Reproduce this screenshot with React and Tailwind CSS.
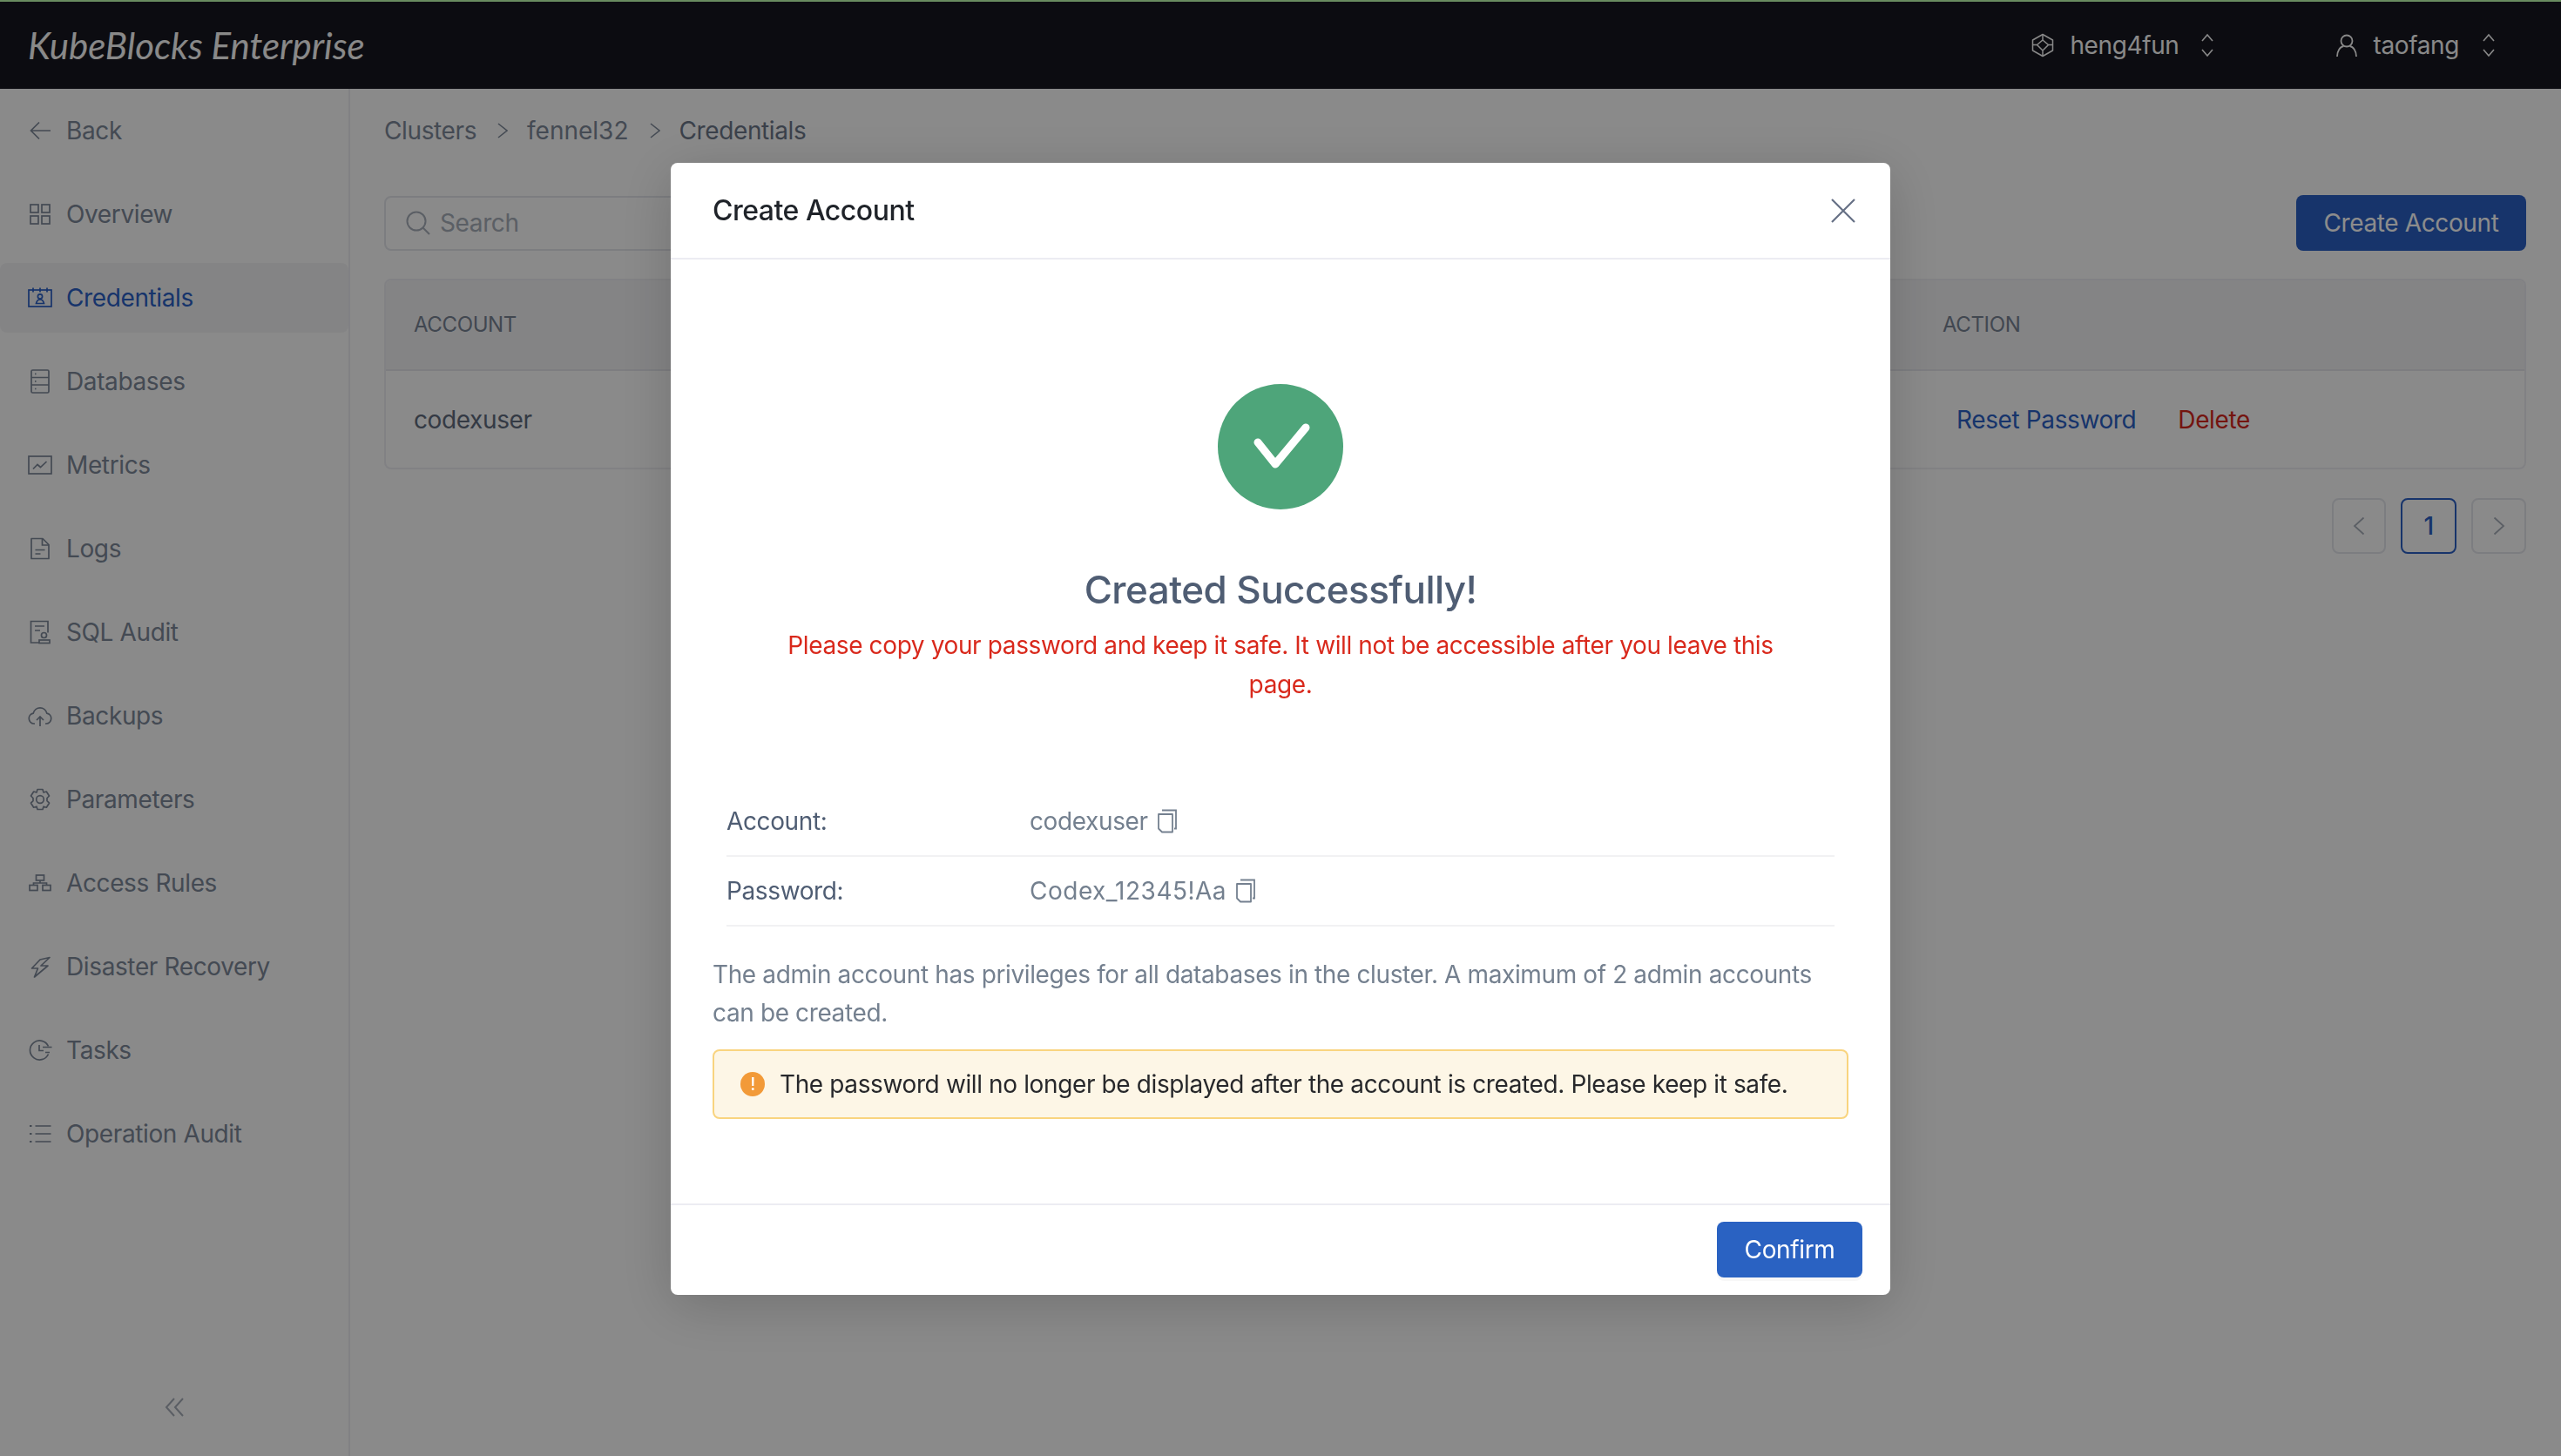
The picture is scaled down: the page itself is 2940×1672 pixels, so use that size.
import React from "react";

const Svg = ({ children, className = "" }) => (
  <svg
    viewBox="0 0 28 28"
    fill="none"
    stroke="currentColor"
    strokeWidth="1.7"
    className={`w-7 h-7 shrink-0 ${className}`}
  >
    {children}
  </svg>
);

const BackIcon = () => (
  <Svg>
    <path d="M26 14H3.500M13 4.500L3.500 14l9.500 9.500" />
  </Svg>
);
const OverviewIcon = () => (
  <Svg>
    <rect x="3" y="3" width="9" height="9" />
    <rect x="16" y="3" width="9" height="9" />
    <rect x="3" y="16" width="9" height="9" />
    <rect x="16" y="16" width="9" height="9" />
  </Svg>
);
const CredentialsIcon = () => (
  <Svg>
    <rect x="1" y="5" width="26" height="19" />
    <path d="M6 2.500v5M14 2.500v5M22 2.500v5" />
    <circle cx="14" cy="12.500" r="2.600" />
    <path d="M9.500 20.500c.6-3 2.400-4.500 4.500-4.500s3.900 1.500 4.500 4.500z" />
  </Svg>
);
const DatabasesIcon = () => (
  <Svg>
    <rect x="4" y="1" width="20" height="26" rx="1.500" />
    <path d="M4 9.500h20M4 18h20" />
    <path d="M8 5.300h1.500M8 13.800h1.500M8 22.500h1.500" />
  </Svg>
);
const MetricsIcon = () => (
  <Svg>
    <rect x="1" y="4" width="26" height="20" />
    <path d="M6 18.500l5-5 3.500 3 7-6.500" />
  </Svg>
);
const LogsIcon = () => (
  <Svg>
    <path d="M4 2.500h13l7 7v16H4z" strokeLinejoin="round" />
    <path d="M16.500 2.500v7.500H24M8.500 15.500h11M8.500 20h6" />
  </Svg>
);
const SqlAuditIcon = () => (
  <Svg>
    <path d="M13 26H3.500V1.500h19.500v13" />
    <path d="M8 7h11M8 12h6" />
    <circle cx="18.500" cy="17.500" r="3" />
    <rect x="13" y="23" width="12" height="3.500" />
  </Svg>
);
const BackupsIcon = () => (
  <Svg>
    <path d="M8 23H7a6 6 0 0 1-.8-11.900 8 8 0 0 1 15.600 0A6 6 0 0 1 21 23h-1" />
    <path d="M14 26V15M10 19l4-4 4 4" />
  </Svg>
);
const ParametersIcon = () => (
  <Svg>
    <path d="M11 2.500h6l1 3.500 3.300-1 3.200 5-2.500 2.500v3.200l2.500 2.500-3.200 5-3.300-1-1 3.300h-6l-1-3.300-3.300 1-3.200-5L6 15.700v-3.200L3.500 10l3.200-5 3.300 1z" strokeLinejoin="round" />
    <circle cx="14" cy="14" r="4.300" />
  </Svg>
);
const AccessRulesIcon = () => (
  <Svg>
    <rect x="9.500" y="5" width="9" height="6" />
    <rect x="2" y="16.500" width="9" height="6" />
    <rect x="17" y="16.500" width="9" height="6" />
    <path d="M6.500 16.500V14h15v2.500M14 11v3" />
  </Svg>
);
const DisasterIcon = () => (
  <Svg>
    <path d="M14 6L4.500 16h7L7.500 26 23 13h-8l10-9.500-11 2.500z" strokeLinejoin="round" />
  </Svg>
);
const TasksIcon = () => (
  <Svg>
    <path d="M23.500 9.500A11 11 0 1 0 23.500 18.500" />
    <path d="M13 8v6.500h5M17 10.500h10.500M20 16.500h5" />
  </Svg>
);
const OperationIcon = () => (
  <Svg>
    <path d="M8.500 5h18M8.500 14h18M8.500 23h18" />
    <path d="M2 5h2.500M2 14h2.500M2 23h2.500" strokeWidth="2.200" />
  </Svg>
);

const CopyIcon = () => (
  <svg viewBox="0 0 24 28" fill="none" stroke="currentColor" strokeWidth="1.800" className="w-6 h-7 shrink-0">
    <path d="M6 1.500h16v21h-2" />
    <path d="M2 6h16v20.500H6l-4-4z" strokeLinejoin="round" />
  </svg>
);

const UpDown = () => (
  <svg viewBox="0 0 16 28" fill="none" stroke="currentColor" strokeWidth="1.600" className="w-4 h-7 shrink-0">
    <path d="M2 9l6-7 6 7M2 19l6 7 6-7" />
  </svg>
);

const CrumbArrow = () => (
  <svg viewBox="0 0 12 18" fill="none" stroke="currentColor" strokeWidth="1.600" className="w-3 h-[18px] shrink-0 ml-6 mr-[22px]">
    <path d="M1 1l10 8-10 8" />
  </svg>
);

const PagePrev = () => (
  <svg viewBox="0 0 14 22" fill="none" stroke="currentColor" strokeWidth="1.800" className="w-[14px] h-[22px]">
    <path d="M12.500 1.500L2 11l10.500 9.500" />
  </svg>
);
const PageNext = () => (
  <svg viewBox="0 0 14 22" fill="none" stroke="currentColor" strokeWidth="1.800" className="w-[14px] h-[22px]">
    <path d="M1.500 1.500L12 11 1.500 20.500" />
  </svg>
);

const navItems = [
  { label: "Back", icon: <BackIcon /> },
  { label: "Overview", icon: <OverviewIcon /> },
  { label: "Credentials", icon: <CredentialsIcon />, active: true },
  { label: "Databases", icon: <DatabasesIcon /> },
  { label: "Metrics", icon: <MetricsIcon /> },
  { label: "Logs", icon: <LogsIcon /> },
  { label: "SQL Audit", icon: <SqlAuditIcon /> },
  { label: "Backups", icon: <BackupsIcon /> },
  { label: "Parameters", icon: <ParametersIcon /> },
  { label: "Access Rules", icon: <AccessRulesIcon /> },
  { label: "Disaster Recovery", icon: <DisasterIcon /> },
  { label: "Tasks", icon: <TasksIcon /> },
  { label: "Operation Audit", icon: <OperationIcon /> },
];

function Sidebar() {
  return (
    <aside className="w-[402px] shrink-0 border-r-2 border-[#ececf0] flex flex-col pt-2 pb-[44px]">
      <nav className="flex flex-col gap-4 flex-1">
        {navItems.map((item) => (
          <div
            key={item.label}
            className={`h-20 flex items-center gap-[16px] pl-8 rounded-lg ${
              item.active ? "bg-[#f1f1f3] text-[#2a5fc4]" : "text-[#7c8798]"
            }`}
          >
            {item.icon}
            <span className="text-[28px] leading-none">{item.label}</span>
          </div>
        ))}
      </nav>
      <div className="flex justify-center text-[#a4abb6]">
        <svg viewBox="0 0 22 24" fill="none" stroke="currentColor" strokeWidth="2" className="w-[22px] h-6">
          <path d="M11 2L2 12l9 10M21 2l-9 10 9 10" />
        </svg>
      </div>
    </aside>
  );
}

function Main() {
  return (
    <main className="flex-1 pl-[39px] pr-10 min-w-0">
      <div className="h-24 flex items-center text-[28px] text-[#7c8798]">
        <span>Clusters</span>
        <CrumbArrow />
        <span className="tracking-normal">fennel32</span>
        <CrumbArrow />
        <span className="text-[#6b7688]">Credentials</span>
      </div>
      <div className="mt-[26px] flex justify-between items-center">
        <div className="w-[640px] h-[63px] border-2 border-[#e2e4ea] rounded-lg flex items-center gap-[11px] pl-[23px] text-[#a6adb8]">
          <svg viewBox="0 0 28 28" fill="none" stroke="currentColor" strokeWidth="2" className="w-7 h-7 shrink-0">
            <circle cx="12" cy="12" r="10.500" />
            <path d="M19.500 19.500L27 27" />
          </svg>
          <span className="text-[28px]">Search</span>
        </div>
        <button className="w-[264px] h-16 rounded-lg bg-[#2a5fc4] text-white text-[28px]">Create Account</button>
      </div>
      <div className="mt-8 h-[219px] border-2 border-[#ececf0] rounded-lg overflow-hidden">
        <div className="h-[104px] bg-[#f1f1f3] border-b-2 border-[#e3e4ea] flex items-center justify-between pl-8 text-[24px] text-[#778293]">
          <span>ACCOUNT</span>
          <span className="w-[668px]">ACTION</span>
        </div>
        <div className="h-[112px] flex items-center justify-between pl-8 text-[28px]">
          <span className="text-[#5f6b7d]">codexuser</span>
          <div className="w-[652px] flex gap-[48px]">
            <span className="text-[#2a5fc4]">Reset Password</span>
            <span className="text-[#d4261c]">Delete</span>
          </div>
        </div>
      </div>
      <div className="mt-[33px] flex justify-end gap-[17px]">
        <div className="w-[62px] h-16 border-2 border-[#e2e4ea] rounded-lg flex items-center justify-center text-[#a6adb8]">
          <PagePrev />
        </div>
        <div className="w-[64px] h-16 border-2 border-[#2a5fc4] rounded-lg flex items-center justify-center text-[#2a5fc4] text-[28px] font-medium">
          1
        </div>
        <div className="w-[63px] h-16 border-2 border-[#e2e4ea] rounded-lg flex items-center justify-center text-[#a6adb8]">
          <PageNext />
        </div>
      </div>
    </main>
  );
}

function Modal() {
  return (
    <div className="fixed inset-0 bg-black/45 flex justify-center items-start pt-[187px]">
      <div className="w-[1400px] h-[1300px] bg-white rounded-lg shadow-[0_12px_64px_rgba(0,0,0,0.18)] flex flex-col">
        <div className="h-[111px] shrink-0 border-b-2 border-[#ececf2] flex items-center justify-between pl-12 pr-10">
          <h2 className="text-[32px] font-medium text-[#1f2329] tracking-[-0.5px]">Create Account</h2>
          <svg viewBox="0 0 28 28" fill="none" stroke="currentColor" strokeWidth="2.200" className="w-7 h-7 text-[#667085]">
            <path d="M1 1l26 26M27 1L1 27" />
          </svg>
        </div>
        <div className="flex-1 px-12 flex flex-col">
          <div className="mt-[143px] flex justify-center">
            <div className="w-36 h-36 rounded-full bg-[#4ea57a] flex items-center justify-center">
              <svg viewBox="0 0 72 72" fill="none" className="w-[72px] h-[72px]">
                <path d="M10 31l20 25L65 14" stroke="white" strokeWidth="9" strokeLinejoin="round" strokeLinecap="round" />
              </svg>
            </div>
          </div>
          <h3 className="mt-[62px] text-center text-[44px] leading-[60px] font-medium text-[#4f5d73] tracking-[-0.55px]">Created Successfully!</h3>
          <p className="mt-[12px] mx-auto w-[1150px] text-center text-[28px] leading-[45px] text-[#d9291c]">
            Please copy your password and keep it safe. It will not be accessible after you leave this page.
          </p>
          <div className="mt-[95px] px-4 text-[28px]">
            <div className="h-20 flex items-center border-b-2 border-[#f1f1f3]">
              <span className="w-[348px] text-[#4f5d73]">Account:</span>
              <span className="text-[#74808f]">codexuser</span>
              <span className="ml-[10px] text-[#74808f]"><CopyIcon /></span>
            </div>
            <div className="h-20 flex items-center border-b-2 border-[#f1f1f3]">
              <span className="w-[348px] text-[#4f5d73]">Password:</span>
              <span className="text-[#74808f] tracking-[0.5px]">Codex_12345!Aa</span>
              <span className="ml-[10px] text-[#74808f]"><CopyIcon /></span>
            </div>
          </div>
          <p className="mt-[33px] text-[28px] leading-[44px] text-[#74808f]">
            The admin account has privileges for all databases in the cluster. A maximum of 2 admin accounts can be created.
          </p>
          <div className="mt-[20px] h-20 border-2 border-[#f9d47f] bg-[#fdf6e6] rounded-lg flex items-center pl-[30px] gap-[17px]">
            <div className="w-7 h-7 rounded-full bg-[#f29a38] text-white text-[20px] leading-none font-medium flex items-center justify-center">!</div>
            <span className="text-[28px] text-[#27282b]">The password will no longer be displayed after the account is created. Please keep it safe.</span>
          </div>
        </div>
        <div className="h-[105px] shrink-0 border-t-2 border-[#ececf2] flex items-center justify-end pr-8 pb-px">
          <button className="w-[167px] h-16 rounded-lg bg-[#2a62c2] text-white text-[28px] shadow-[0_4px_0_rgba(0,0,0,0.03)]">Confirm</button>
        </div>
      </div>
    </div>
  );
}

export default function App() {
  return (
    <div className="w-[2940px] h-[1672px] overflow-hidden flex flex-col bg-[#fbfbfb] font-['Inter',sans-serif] tracking-[-0.38px]">
      <header className="h-[102px] shrink-0 bg-[#17171f] border-t-2 border-[#c0ffb0] flex items-center justify-between text-[#f9f9f9]">
        <span className="ml-8 font-['Lato',sans-serif] italic text-[42px] leading-none tracking-normal">KubeBlocks Enterprise</span>
        <div className="flex items-center text-[28px]">
          <svg viewBox="0 0 28 28" fill="none" stroke="currentColor" strokeWidth="1.500" className="w-7 h-7 shrink-0">
            <path d="M14 1.500l11.500 6.500v12L14 26.500 2.500 20V8z" strokeLinejoin="round" />
            <path d="M14 8l6.500 5.500L14 20l-6.500-6.500zM14 1.500V8M2.500 13.500h5M20.500 13.500h5M14 20v6.500" />
          </svg>
          <span className="ml-[17px]">heng4fun</span>
          <span className="ml-[25px]"><UpDown /></span>
          <svg viewBox="0 0 28 28" fill="none" stroke="currentColor" strokeWidth="1.800" className="w-7 h-7 shrink-0 ml-[138px]">
            <circle cx="14" cy="9" r="6.500" />
            <path d="M3 27c0-6.500 3.500-11.500 7.500-12M25 27c0-6.500-3.500-11.500-7.500-12" />
          </svg>
          <span className="ml-[16px]">taofang</span>
          <span className="ml-[26px] mr-[75px]"><UpDown /></span>
        </div>
      </header>
      <div className="flex-1 flex min-h-0">
        <Sidebar />
        <Main />
      </div>
      <Modal />
    </div>
  );
}
